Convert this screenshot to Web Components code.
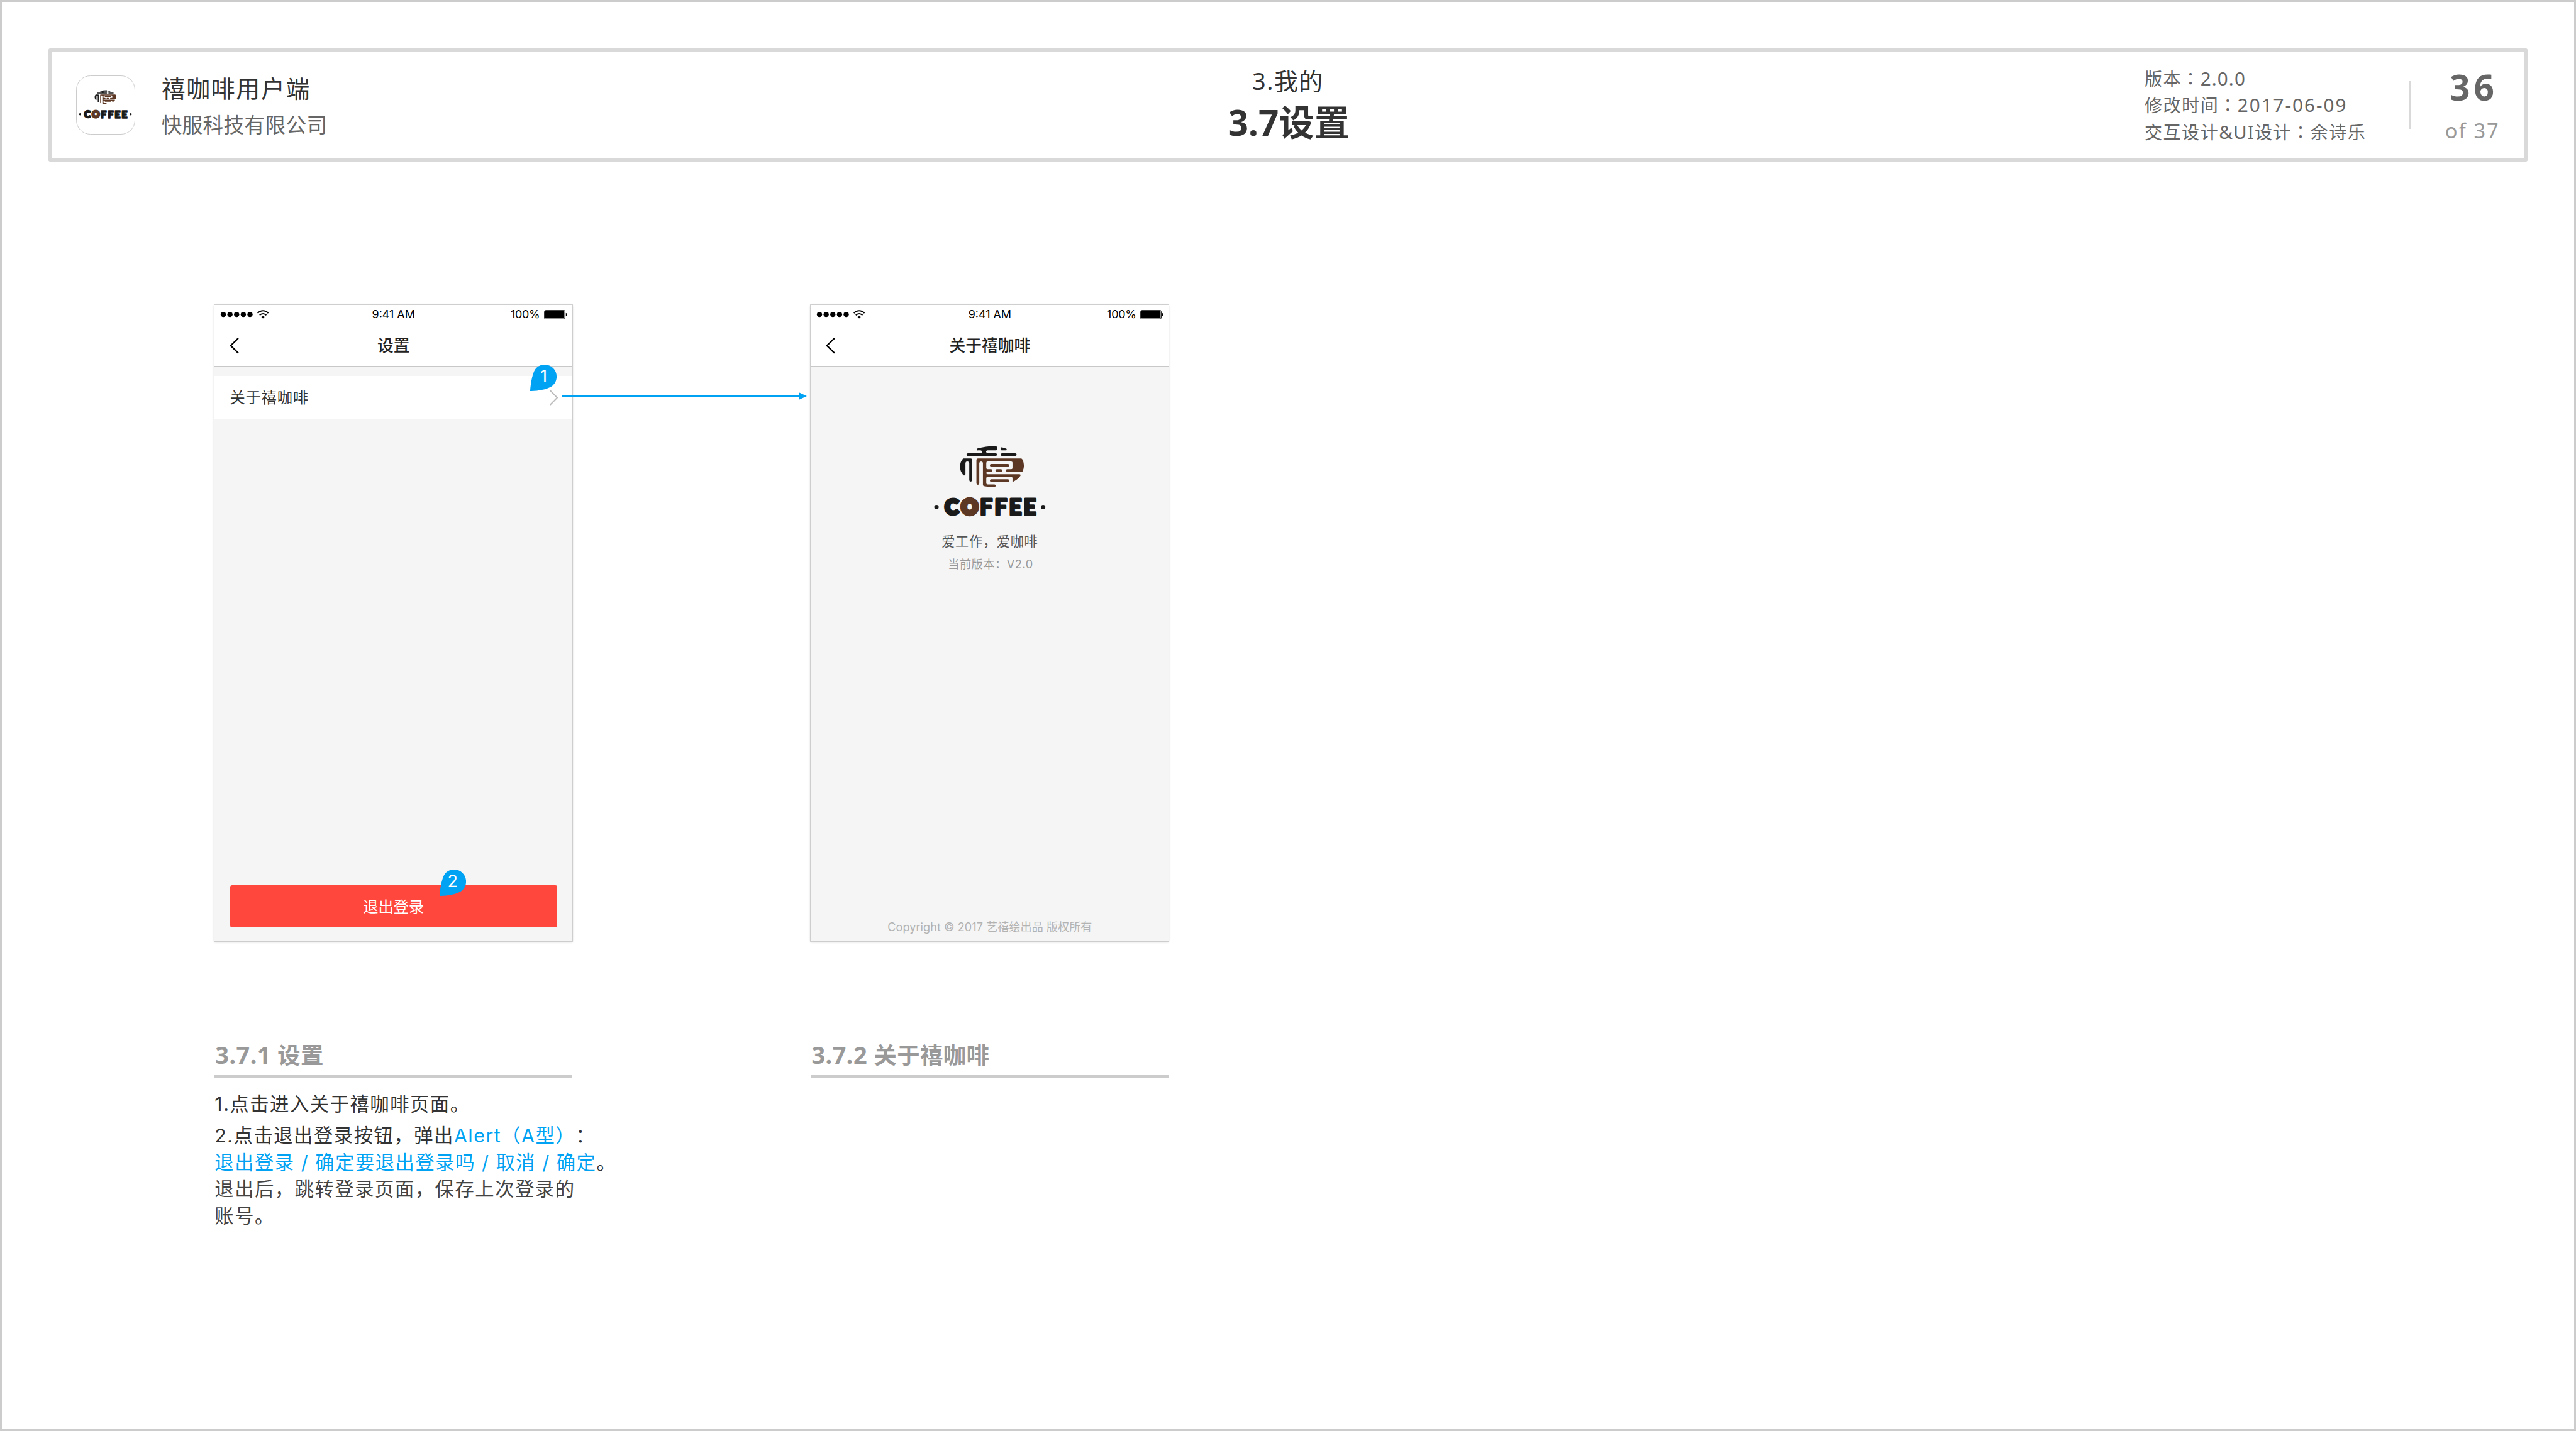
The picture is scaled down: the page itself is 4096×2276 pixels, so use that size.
<!DOCTYPE html>
<html lang="zh-CN">
<head>
<meta charset="utf-8">
<title>3.7设置</title>
<style>
  /* 1rem = 100 design units; the artboard is 54rem wide */
  html { font-size: calc(100vw / 54); text-spacing-trim: space-all; }
  body { margin: 0; background: #fff; overflow: hidden; }
</style>
</head>
<body>
<spec-page>
  <spec-header slot="header"></spec-header>
  <spec-column heading-no="3.7.1" heading="设置">
    <phone-frame slot="screen" heading="设置">
      <list-row>关于禧咖啡</list-row>
      <action-button>退出登录</action-button>
    </phone-frame>
    <note-pin slot="overlay" style="left:6.62rem;top:1.247rem">1</note-pin>
    <note-pin slot="overlay" style="left:4.713rem;top:11.837rem">2</note-pin>
    <flow-arrow slot="overlay" style="left:7.29rem;top:1.82rem"></flow-arrow>
    <spec-notes slot="notes"></spec-notes>
  </spec-column>
  <spec-column heading-no="3.7.2" heading="关于禧咖啡">
    <phone-frame slot="screen" heading="关于禧咖啡">
      <about-panel></about-panel>
    </phone-frame>
  </spec-column>
</spec-page>
<script>
const SC = `"Noto Sans CJK SC", sans-serif`;
const HUM = `"Noto Sans", ${SC}`;
const UI = `Inter, ${SC}`;

const define = (name, html) => customElements.define(name, class extends HTMLElement {
  constructor() {
    super();
    this.attachShadow({ mode: 'open' }).innerHTML = typeof html === 'function' ? html(this) : html;
  }
});

define('spec-page', `
<style>
  :host { display: flex; flex-direction: column; box-sizing: border-box; width: 54rem; height: 100vh; border: .04rem solid #ccc; background: #fff; }
  main { display: flex; gap: 5rem; margin: 3rem 0 0 4.46rem; }
</style>
<slot name="header"></slot>
<main><slot></slot></main>`);

define('coffee-mark', `
<style>
  :host { display: block; aspect-ratio: 414 / 270; }
  svg { display: block; width: 100%; height: 100%; }
</style>
<svg viewBox="270 100 414 270">
  <g fill="#1a1a1a">
    <path d="M386 121Q440 105 500 106a8 8 0 0 1 8 8V126a7 7 0 0 1-8 7H446Q438 135 440 143Q442 150 450 151H500a8.500 8.500 0 0 1 0 17H325a8.500 8.500 0 0 1 0-17H405Q415 149 415 142Q415 134 405 133H388a6 6 0 0 1-2-12Z"/>
    <path d="M531 118Q532 112 540 114Q555 117 568 123Q572 128 567 133H538Q532 133 531 128Z"/>
    <rect x="531" y="151" width="101" height="17" rx="8.500"/>
    <path d="M296 184H343a9 9 0 0 1 9 9V320a9 9 0 0 1-18 0V212Q333 203 322 203Q311 203 310 212V283a8 8 0 0 1-14 5C282 270 276 255 276 235C276 215 284 195 296 184Z"/>
  </g>
  <g fill="#5c3724">
    <path d="M388 184H660Q666 184 668 190Q678 208 678 228Q678 248 670 264Q668 268 664 268H573a8 8 0 0 1 0-17H598Q606 251 606 243V210Q606 203 598 203H450Q441 203 441 212V243Q441 251 450 251H471a8 8 0 0 1 0 17H450Q441 268 441 276Q441 283 450 283H648Q660 283 655 294Q640 317 606 332V308Q606 300 598 300H450Q441 300 441 308V338Q441 347 450 347H492a8 8 0 0 1 0 16Q450 363 428 358Q420 356 420 350V213Q419 203 408 203Q398 203 397 213V340a9 9 0 0 1-18 0V193Q379 184 388 184Z"/>
    <rect x="464" y="219" width="121" height="17" rx="8"/>
    <rect x="499" y="251" width="42" height="17" rx="8"/>
    <rect x="464" y="315" width="121" height="17" rx="8"/>
  </g>
</svg>`);

define('coffee-word', `
<style>
  :host { display: block; aspect-ratio: 712 / 130; }
  svg { display: block; width: 100%; height: 100%; overflow: visible; }
  text { font-family: Lato, sans-serif; font-weight: 900; fill: #1a1a1a; stroke: #1a1a1a; stroke-linejoin: round; }
  .c { font-size: 130px; stroke-width: 20px; }
  .o { font-size: 125px; stroke-width: 26px; fill: #5c3724; stroke: #5c3724; }
  .f { font-size: 141px; stroke-width: 12px; }
</style>
<svg viewBox="110 424 712 130">
  <circle cx="130" cy="489" r="14" fill="#1a1a1a"/>
  <circle cx="801" cy="489" r="14" fill="#1a1a1a"/>
  <text y="536"><tspan class="c" x="183">C</tspan><tspan class="o" x="288" y="533">O</tspan><tspan class="f" x="403 495 586 677" y="540">FFEE</tspan></text>
</svg>`);

define('spec-header', `
<style>
  :host { display: grid; grid-template-columns: 1fr auto 1fr; box-sizing: border-box; width: 52rem; height: 2.4rem; margin: .96rem 0 0 .96rem; border: .08rem solid #d9d9d9; border-radius: .08rem; color: #333; font-family: ${HUM}; white-space: nowrap; }
  .brand { display: flex; }
  .icon { display: flex; flex-direction: column; align-items: center; box-sizing: border-box; width: 1.24rem; height: 1.24rem; margin: .5rem .55rem 0 .515rem; border: .015rem solid #ccc; border-radius: .3rem; }
  coffee-mark { width: .464rem; margin-top: .29rem; }
  coffee-word { width: 1.125rem; margin-top: .115rem; flex: none; }
  .names { padding-top: .457rem; font-family: ${SC}; }
  .app { font-size: .5rem; letter-spacing: .022rem; line-height: .6rem; }
  .company { margin-top: .16rem; font-size: .43rem; letter-spacing: .005rem; line-height: .6rem; color: #666; }
  .title { padding-top: .316rem; text-align: center; }
  .chapter { font-size: .5rem; letter-spacing: .02rem; line-height: .6rem; }
  .section { margin-top: .132rem; padding-left: .04rem; font-size: .745rem; line-height: .9rem; font-weight: 700; }
  .side { display: flex; justify-content: flex-end; color: #666; }
  .meta { width: 5.555rem; padding-top: .288rem; font-size: .37rem; letter-spacing: .02rem; line-height: .56rem; }
  .meta b { font-weight: 400; font-size: .39rem; letter-spacing: .015rem; }
  .meta b.date { letter-spacing: .0265rem; }
  .meta i { font: inherit; font-family: "Noto Sans CJK TC", sans-serif; line-height: 0; }
  .rule { width: .04rem; height: 1rem; margin-top: .62rem; background: #d9d9d9; }
  .page { width: 1.665rem; margin-left: .705rem; padding-top: .289rem; }
  .no { padding-left: .096rem; font-size: .75rem; letter-spacing: .077rem; line-height: .9rem; font-weight: 700; }
  .of { margin-top: .172rem; font-size: .43rem; letter-spacing: .027rem; line-height: .6rem; color: #999; }
</style>
<div class="brand">
  <div class="icon"><coffee-mark></coffee-mark><coffee-word></coffee-word></div>
  <div class="names"><div class="app">禧咖啡用户端</div><div class="company">快服科技有限公司</div></div>
</div>
<div class="title"><div class="chapter">3.我的</div><div class="section">3.7设置</div></div>
<div class="side">
  <div class="meta">
    <div>版本<i lang="zh-TW">：</i><b>2.0.0</b></div>
    <div>修改时间<i lang="zh-TW">：</i><b class="date">2017-06-09</b></div>
    <div>交互设计<b>&amp;UI</b>设计<i lang="zh-TW">：</i>余诗乐</div>
  </div>
  <div class="rule"></div>
  <div class="page"><div class="no">36</div><div class="of">of 37</div></div>
</div>`);

define('spec-column', el => `
<style>
  :host { display: block; position: relative; width: 7.5rem; }
  h2 { margin: 2.08rem 0 0; padding: 0 0 .1rem .014rem; border-bottom: .08rem solid #ccc; font: 700 .5rem/.6rem ${HUM}; letter-spacing: .006rem; color: #999; white-space: pre; }
  h2 span { font-size: .48rem; letter-spacing: .005rem; }
</style>
<slot name="screen"></slot>
<h2>${el.getAttribute('heading-no')} <span>${el.getAttribute('heading')}</span></h2>
<slot name="notes"></slot>
<slot name="overlay"></slot>`);

define('status-bar', `
<style>
  :host { display: grid; grid-template-columns: 1fr auto 1fr; height: .4rem; font: 400 .236rem/.4rem ${UI}; color: #000; }
  svg { display: block; }
  .signal { width: 1.2rem; height: .4rem; }
  .right { display: flex; justify-content: flex-end; align-items: center; gap: .082rem; padding-right: .11rem; letter-spacing: -.003rem; }
  .battery { width: .49rem; height: .2rem; }
</style>
<svg class="signal" viewBox="0 0 120 40">
  <circle cx="18.500" cy="20" r="5.500"/><circle cx="32.500" cy="20" r="5.500"/><circle cx="46.500" cy="20" r="5.500"/><circle cx="60.500" cy="20" r="5.500"/><circle cx="74.500" cy="20" r="5.500"/>
  <g fill="none" stroke="#000" stroke-width="2.500"><path d="M90.600 17.300Q95.500 12.200 101.700 12.200T112.800 17.300"/><path d="M94.600 21.400Q97.800 18.400 101.700 18.400T108.800 21.400"/></g>
  <path d="M98.200 25Q101.700 22.200 105.200 25L101.700 28.300Z"/>
</svg>
<span>9:41 AM</span>
<div class="right"><span>100%</span>
  <svg class="battery" viewBox="0 0 49 20">
    <rect x=".6" y=".8" width="43.600" height="18" rx="2.600" fill="none" stroke="#000" stroke-width="1.100"/>
    <rect x="2" y="2.200" width="40.800" height="15.200" rx="1.400"/>
    <path d="M45.800 6.400Q48.800 7.400 48.800 9.900T45.800 13.400Z"/>
  </svg>
</div>`);

define('phone-frame', el => `
<style>
  :host { display: flex; flex-direction: column; width: 7.5rem; height: 13.34rem; background: #f5f5f5; box-shadow: 0 0 0 .012rem #ccc, 0 .015rem .05rem rgba(0,0,0,.22); }
  header { background: #fff; border-bottom: .014rem solid #c8c8c8; }
  nav { display: grid; grid-template-columns: 1fr auto 1fr; height: .868rem; font: 500 .34rem/.84rem ${SC}; color: #222; }
  svg { display: block; width: .6rem; height: .868rem; }
</style>
<header>
  <status-bar></status-bar>
  <nav>
    <svg viewBox="0 0 60 86.800"><path d="M50 28.800L34 44.400L50 60.200" fill="none" stroke="#000" stroke-width="3"/></svg>
    <span>${el.getAttribute('heading')}</span>
  </nav>
</header>
<slot></slot>`);

define('list-row', `
<style>
  :host { display: flex; justify-content: space-between; height: .9rem; margin-top: .2rem; padding-left: .32rem; background: #fff; font: 400 .32rem/.874rem ${SC}; letter-spacing: .01rem; color: #333; }
  svg { display: block; width: .5rem; height: .9rem; }
</style>
<span><slot></slot></span>
<svg viewBox="0 0 50 90"><path d="M3.500 30.200L18.500 45.400L3.500 60.700" fill="none" stroke="#bbb" stroke-width="2.600"/></svg>`);

define('action-button', `
<style>
  :host { display: block; height: .88rem; margin: auto .32rem .3rem; border-radius: .04rem; background: #ff473d; font: 400 .32rem/.86rem ${SC}; color: #fff; text-align: center; }
</style>
<slot></slot>`);

define('about-panel', `
<style>
  :host { display: flex; flex: 1; flex-direction: column; align-items: center; white-space: nowrap; font-family: ${UI}; }
  coffee-mark { width: 1.38rem; margin: 1.653rem 0 0 .08rem; }
  coffee-word { width: 2.373rem; margin-top: .18rem; }
  .slogan { margin-top: .3rem; font: 400 .28rem/.4rem ${SC}; letter-spacing: .009rem; color: #555; }
  .version { margin: .087rem 0 0 .03rem; font-size: .24rem; line-height: .4rem; letter-spacing: .007rem; color: #999; }
  .legal { margin-top: auto; padding-bottom: .09rem; font-size: .238rem; line-height: .4rem; letter-spacing: .001rem; color: #b3b3b3; }
</style>
<coffee-mark></coffee-mark>
<coffee-word></coffee-word>
<div class="slogan">爱工作，爱咖啡</div>
<div class="version">当前版本：V2.0</div>
<div class="legal">Copyright © 2017 艺禧绘出品 版权所有</div>`);

define('note-pin', `
<style>
  :host { display: block; position: absolute; isolation: isolate; width: .555rem; height: .555rem; }
  div { height: .555rem; font: 400 .355rem/.486rem ${UI}; color: #fff; text-align: center; }
  svg { position: absolute; inset: 0; width: 100%; height: 100%; z-index: -1; }
</style>
<svg viewBox="0 0 55.500 55.500"><path d="M0 55.500C1 40 4 24 8 14.500C12 5 21 0 30.500 0C44.500 0 55.500 11 55.500 25C55.500 34 51 42 44 46C33 52.500 15 55 0 55.500Z" fill="#00a2f3"/></svg>
<div><slot></slot></div>`);

define('flow-arrow', `
<style>
  :host { display: flex; align-items: center; position: absolute; width: 5.126rem; height: .16rem; }
  i { flex: 1; height: .027rem; background: #00a2f3; }
  b { border-left: .176rem solid #00a2f3; border-top: .08rem solid transparent; border-bottom: .08rem solid transparent; }
</style>
<i></i><b></b>`);

define('spec-notes', `
<style>
  :host { display: block; margin-top: .262rem; font: 400 .4rem/.56rem ${UI}; letter-spacing: .02rem; color: #333; white-space: nowrap; }
  p { margin: 0 0 .104rem; }
  em { font-style: normal; color: #00a2f3; }
  .soft { color: #444; }
</style>
<p>1.点击进入关于禧咖啡页面。</p>
<p>2.点击退出登录按钮，弹出<em>Alert（A型）</em>：<br><em>退出登录 / 确定要退出登录吗 / 取消 / 确定</em>。<br><span class="soft">退出后，跳转登录页面，保存上次登录的<br>账号。</span></p>`);
</script>
</body>
</html>
